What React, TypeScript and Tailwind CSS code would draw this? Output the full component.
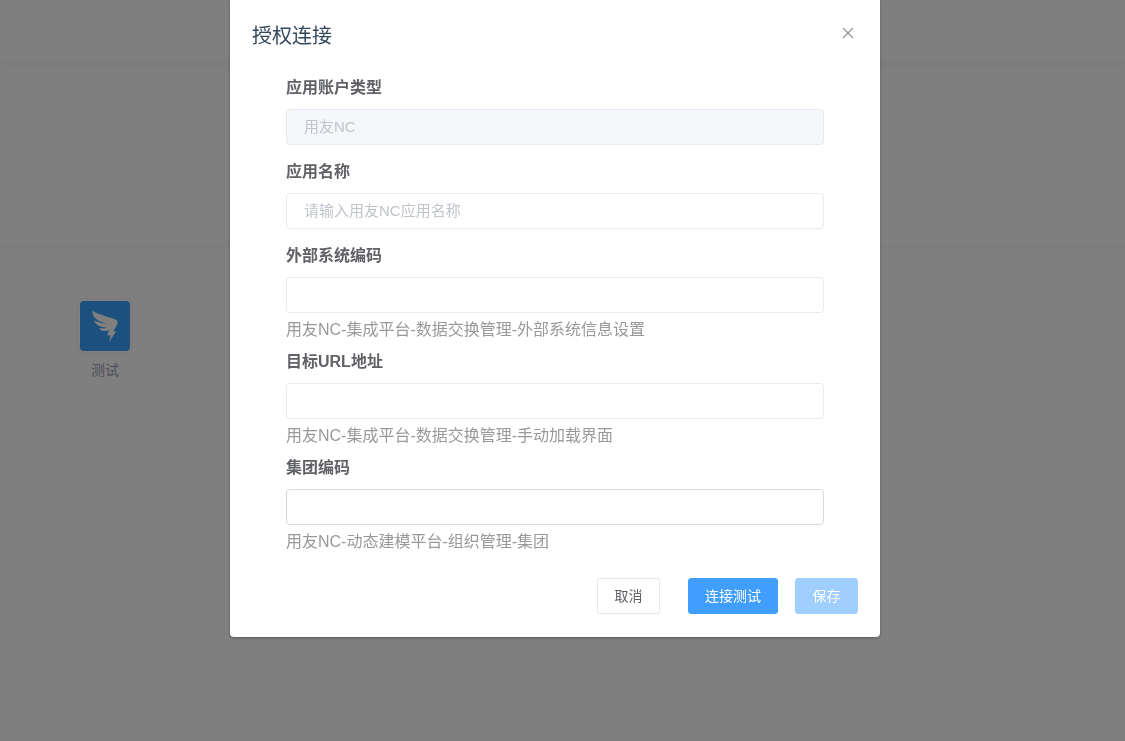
import { useState } from 'react';

type Field = {
  id: string;
  label: string;
  placeholder?: string;
  hint?: string;
  disabled?: boolean;
  active?: boolean;
};

const fields: Field[] = [
  { id: 'accountType', label: '应用账户类型', placeholder: '用友NC', disabled: true },
  { id: 'appName', label: '应用名称', placeholder: '请输入用友NC应用名称' },
  { id: 'systemCode', label: '外部系统编码', hint: '用友NC-集成平台-数据交换管理-外部系统信息设置' },
  { id: 'targetUrl', label: '目标URL地址', hint: '用友NC-集成平台-数据交换管理-手动加载界面' },
  { id: 'groupCode', label: '集团编码', hint: '用友NC-动态建模平台-组织管理-集团', active: true },
];

function WingIcon() {
  return (
    <svg viewBox="0 0 50 50" className="size-full" aria-hidden="true">
      <path
        fill="#fff"
        d="M12.300 9.500C16 13 27 15.200 35.500 18.600C37.500 19.500 38 20.600 37.500 22.200C36.800 24.800 35 27.500 33.200 30.200H36L29.300 41.200L30.500 34.200H27L29.200 29.300C25 31 21.300 30 18.800 26.900C21.500 27.400 24.500 27.300 27 26.700C20.500 26.200 15.600 24.300 14 19.300C17.500 21.300 22 22.400 26.500 22.600C19 20.600 12.300 17.500 12.300 9.500Z"
      />
    </svg>
  );
}

function AppPage() {
  return (
    <div className="flex min-h-screen flex-col bg-white">
      <header className="h-[61px] shadow-[0_2px_8px_rgba(0,0,0,0.06)]" />
      <section className="h-[186px] border-b border-[#f4f4f4]" />
      <main className="flex px-[78px] pt-[52px]">
        <a href="#app" className="flex flex-col items-center gap-1.5">
          <span className="block size-[54px] rounded-md border-2 border-white bg-[#38a2ff] shadow-[0_0_2px_rgba(0,0,0,0.15)]">
            <WingIcon />
          </span>
          <span className="text-sm leading-[22px] text-[#9a9fb0]">测试</span>
        </a>
      </main>
    </div>
  );
}

function FormField({ field }: { field: Field }) {
  const [value, setValue] = useState('');

  return (
    <div className={field.hint ? 'pb-1.5' : 'pb-3.5'}>
      <label htmlFor={field.id} className="block text-base leading-[26px] font-bold text-[#606266]">
        {field.label}
      </label>
      <input
        id={field.id}
        type="text"
        value={value}
        onChange={(e) => setValue(e.target.value)}
        placeholder={field.placeholder}
        disabled={field.disabled}
        className={`mt-2 block h-9 w-full rounded border px-[17px] pb-0.5 text-[15px] text-[#606266] outline-none placeholder:text-[#c0c4cc] disabled:bg-[#f5f7fa] ${
          field.active ? 'border-[#d6d9e0]' : 'border-[#e8eaef]'
        }`}
      />
      {field.hint && <p className="mt-1 text-base leading-[26px] text-[#999]">{field.hint}</p>}
    </div>
  );
}

export default function App() {
  return (
    <div className="relative font-['Liberation_Sans','Noto_Sans_CJK_SC',sans-serif]">
      <AppPage />
      <div className="fixed inset-0 overflow-auto bg-black/50 pr-[15px]">
        <div
          role="dialog"
          aria-labelledby="dialogTitle"
          className="mx-auto w-[650px] max-w-full rounded-b-sm bg-white shadow-[0_1px_3px_rgba(0,0,0,0.3)]"
        >
          <div className="flex items-start justify-between px-[22px] pt-[23px]">
            <h2 id="dialogTitle" className="text-xl leading-[26px] text-[#34495e]">
              授权连接
            </h2>
            <button type="button" aria-label="关闭" className="flex size-5 items-center justify-center text-[#909399]">
              <svg
                viewBox="0 0 12 12"
                className="size-3"
                fill="none"
                stroke="currentColor"
                strokeWidth="1.2"
                aria-hidden="true"
              >
                <path d="M1 1l10 10M11 1L1 11" />
              </svg>
            </button>
          </div>

          <form className="px-14 pt-[26px]">
            {fields.map((field) => (
              <FormField key={field.id} field={field} />
            ))}
          </form>

          <div className="flex justify-end px-[22px] pt-[17px] pb-[23px] text-sm">
            <button
              type="button"
              className="h-9 min-w-[63px] rounded-[3px] border border-[#e6e8ed] px-4 text-[#606266]"
            >
              取消
            </button>
            <button
              type="button"
              className="ml-7 h-9 rounded-[3px] border border-[#409eff] bg-[#409eff] px-4 text-white"
            >
              连接测试
            </button>
            <button
              type="button"
              disabled
              className="ml-[17px] h-9 min-w-[63px] rounded-[3px] border border-[#a0cfff] bg-[#a0cfff] px-4 text-white"
            >
              保存
            </button>
          </div>
        </div>
      </div>
    </div>
  );
}
